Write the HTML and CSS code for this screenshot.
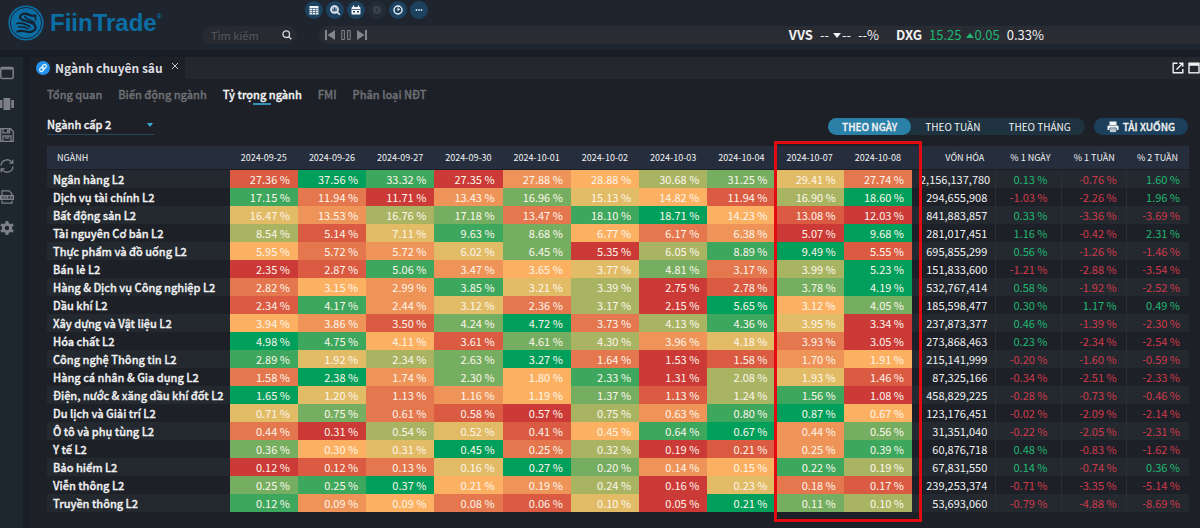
FILE: index.html
```html
<!DOCTYPE html>
<html lang="vi">
<head>
<meta charset="utf-8">
<title>FiinTrade - Ngành chuyên sâu</title>
<link rel="stylesheet" href="styles.css">
</head>
<body>
<header class="topbar">
  <a class="brand" href="#" aria-label="FiinTrade">
    <svg class="brand-mark" viewBox="0 0 36 36" aria-hidden="true">
      <circle cx="18" cy="18" r="17.6" fill="#0b6ea4"/>
      <circle cx="18" cy="18" r="15.6" fill="none" stroke="#1b2733" stroke-width="1"/>
      <g fill="none" stroke="#14212e" stroke-linecap="round" stroke-linejoin="round">
        <path d="M27 10.500c-3 1.500-5-1-8.500-1.700-3.500-.6-6.500 1-6.500 3.700 0 4 14 3.500 15.500 9 .8 3.500-3 5.800-7 5.500-4-.3-6.500-2.500-11-.5" stroke-width="2.200"/>
        <path d="M17 11.500c0 3 8 3.500 9.500 6.500M27.500 10v5M9 18.500c4-1 9 .5 13 3.500M10.500 22c3-.6 7 0 9.500 2" stroke-width="1.600"/>
      </g>
    </svg>
    <span class="brand-name">FiinTrade<sup>®</sup></span>
  </a>
  <div class="topbar-main">
    <nav class="quick" aria-label="Công cụ">
      <button class="quick-btn" aria-label="Bảng giá"><svg viewBox="0 0 18 18"><rect x="4.500" y="5" width="9" height="8.500" fill="#eef3f8"/><path d="M4.500 7.500h9M4.500 9.500h9M4.500 11.500h9M7.500 7v6.500M10.500 7v6.500" stroke="#3c5f7e" stroke-width=".7"/></svg></button>
      <button class="quick-btn" aria-label="Phân tích"><svg viewBox="0 0 18 18"><circle cx="8.500" cy="8.500" r="3.700" fill="#9db4cc" stroke="#eef3f8" stroke-width="1.300"/><path d="M7 10V8M8.500 10V6.500M10 10V7.500" stroke="#29455f"/><path d="M11.300 11.300l2.400 2.500" stroke="#eef3f8" stroke-width="1.600"/></svg></button>
      <button class="quick-btn" aria-label="Lịch"><svg viewBox="0 0 18 18"><rect x="4.500" y="6" width="9" height="7.500" rx="1" fill="#eef3f8"/><path d="M6.500 4.500V7M11.500 4.500V7" stroke="#eef3f8" stroke-width="1.400"/><path d="M4.500 8.500h9" stroke="#29455f" stroke-width=".8"/><path d="M6 10h2v1.600H6zM10 10h2v1.600h-2z" fill="#29455f"/></svg></button>
      <button class="quick-btn quick-off" aria-label="Tắt"><svg viewBox="0 0 18 18"><circle cx="9" cy="9" r="4" fill="#3a444f"/><path d="M9 7v4" stroke="#27313c" stroke-width="1.500"/></svg></button>
      <button class="quick-btn" aria-label="Lịch sử"><svg viewBox="0 0 18 18" fill="none" stroke="#eef3f8" stroke-width="1.400"><circle cx="9" cy="9" r="4"/><path d="M9 6.500V9l1.800-1" stroke-width="1.100"/></svg></button>
      <button class="quick-btn" aria-label="Thêm"><svg viewBox="0 0 18 18" fill="#cfe0ee"><circle cx="6.500" cy="9" r=".9"/><circle cx="9" cy="9" r=".9"/><circle cx="11.500" cy="9" r=".9"/></svg></button>
    </nav>
    <div class="ticker-row">
      <label class="search"><input type="text" placeholder="Tìm kiếm" aria-label="Tìm kiếm"><svg viewBox="0 0 12 12" fill="none" stroke="#d5d8dc" stroke-width="1.300"><circle cx="5.200" cy="5.200" r="3.300"/><path d="M7.700 7.700l2.600 2.600"/></svg></label>
      <div class="ticker">
        <div class="player">
          <button aria-label="Trước"><svg viewBox="0 0 10 12" fill="#83868b"><path d="M0 1h2v10H0zM10 1v10L2.500 6z"/></svg></button>
          <button aria-label="Tạm dừng"><svg viewBox="0 0 10 12" fill="none" stroke="#83868b"><path d="M.8 1.500h2.600v9H.8zM6.600 1.500h2.600v9H6.600z"/></svg></button>
          <button aria-label="Sau"><svg viewBox="0 0 10 12" fill="#83868b"><path d="M8 1h2v10H8zM0 1v10l7.500-5z"/></svg></button>
        </div>
        <div class="quotes">
          <p class="quote"><b>VVS</b><span>--<i class="tri tri-down"></i>--</span><span>--%</span></p>
          <p class="quote"><b>DXG</b><span class="gain">15.25<i class="tri tri-up"></i>0.05</span><span>0.33%</span></p>
        </div>
      </div>
    </div>
  </div>
</header>

<div class="workspace">
  <aside class="rail">
    <button aria-label="Cửa sổ"><svg viewBox="0 0 14 14" fill="none" stroke="#7d8187" stroke-width="1.500"><rect x=".8" y="1.500" width="12.400" height="11" rx="1.500"/><path d="M1 2.600h12" stroke-width="2"/></svg></button>
    <button aria-label="Bố cục"><svg viewBox="0 0 14 14" fill="#7d8187"><path d="M3.500 1h6.800v12H3.500zM0 3h2.500v8H0zM11.300 3H14v8h-2.700z"/></svg></button>
    <button aria-label="Lưu"><svg viewBox="0 0 14 14" fill="none" stroke="#7d8187" stroke-width="1.300"><path d="M.7.700h9.800l2.800 2.800v9.800H.7zM3 1v3.800h6.500V1M3 13V8h8v5M5 10h4"/><path d="M7.800 1.500v2.500" stroke-width="1.600"/></svg></button>
    <button aria-label="Làm mới"><svg viewBox="0 0 14 14" fill="none" stroke="#7d8187" stroke-width="1.300"><path d="M1 6.500A6 6 0 0 1 12 3.500M13 7.500A6 6 0 0 1 2 10.500M12.800.8v3.400H9.300M1.200 13.200V9.800h3.500"/></svg></button>
    <button aria-label="Xuất XLSX"><svg viewBox="0 0 14 14" fill="none" stroke="#7d8187" stroke-width="1.200"><path d="M2 5V.8h7l3 3V5M2 10.500v2.700h10v-2.700"/><rect x="0" y="5" width="14" height="5" fill="#7d8187" stroke="none"/><path d="M2 6.300l2 2.600M4 6.300L2 8.900M5.700 6v2.600h1.500M10 6.500H8.300v1H10v1H8.200M11 6.300l1.700 2.600M12.700 6.300L11 8.900" stroke="#252c35" stroke-width=".7"/></svg></button>
    <button aria-label="Cài đặt"><svg viewBox="0 0 14 14"><circle cx="7" cy="7" r="3.700" fill="none" stroke="#7d8187" stroke-width="3"/><path d="M7 0v2.500M7 11.500V14M0.900 3.500l2.200 1.200M10.900 9.300l2.200 1.200M.9 10.500l2.200-1.200M10.900 4.700l2.200-1.200" stroke="#7d8187" stroke-width="3"/></svg></button>
  </aside>

  <main class="panel">
    <div class="panel-head">
      <div class="panel-tab">
        <svg class="link-badge" viewBox="0 0 14 14" aria-hidden="true"><circle cx="7" cy="7" r="7" fill="#2492ec"/><g fill="none" stroke="#e8f5ff" stroke-width="1.200" transform="rotate(-48 7 7)"><rect x="2.800" y="5.300" width="5" height="3.400" rx="1.700"/><rect x="6.200" y="5.300" width="5" height="3.400" rx="1.700"/></g></svg>
        <h1>Ngành chuyên sâu</h1>
        <button class="close" aria-label="Đóng"><svg viewBox="0 0 8 8" stroke="#c8cacd" stroke-width="1"><path d="M1 1l6 6M7 1L1 7"/></svg></button>
      </div>
      <div class="window-tools">
        <button aria-label="Mở rộng"><svg viewBox="0 0 12 12" fill="none" stroke="#f0f1f2" stroke-width="1.400"><path d="M5.500 1.200H1.200v9.600h9.600V7M7.200 1.200h3.600v3.600M10.500 1.500L4.500 7.500"/></svg></button>
        <button aria-label="Phóng to"><svg viewBox="0 0 12 12" fill="none" stroke="#f0f1f2" stroke-width="1.400"><rect x="1" y="1.200" width="10" height="9.600"/><path d="M1 2.500h10" stroke-width="2.500"/></svg></button>
      </div>
    </div>

    <nav class="subtabs">
      <a href="#">Tổng quan</a>
      <a href="#">Biến động ngành</a>
      <a href="#" class="current" aria-current="page">Tỷ trọng ngành</a>
      <a href="#">FMI</a>
      <a href="#">Phân loại NĐT</a>
    </nav>

    <div class="controls">
      <div class="level">
        <select aria-label="Cấp ngành"><option>Ngành cấp 2</option><option>Ngành cấp 1</option></select>
      </div>
      <div class="actions">
        <div class="period">
          <button class="active">THEO NGÀY</button>
          <button>THEO TUẦN</button>
          <button>THEO THÁNG</button>
        </div>
        <button class="download"><svg viewBox="0 0 12 12" fill="#f2f5f8"><path d="M2.500.5h7V4h-7zM1.500 4.500h9a1 1 0 0 1 1 1V9H.5V5.500a1 1 0 0 1 1-1z"/><path d="M2.800 7h6.400v4.500H2.800z" stroke="#1c405b" stroke-width=".8"/><path d="M4 8.700h4M4 10h4" stroke="#5e7890" stroke-width=".6"/></svg>TẢI XUỐNG</button>
      </div>
    </div>

    <div class="table-wrap">
      <table class="weights">
        <colgroup><col class="c-name"><col class="c-day" span="10"><col class="c-cap"><col class="c-d1"><col class="c-w1"><col class="c-w2"></colgroup>
        <thead>
          <tr>
            <th scope="col" class="name">NGÀNH</th>
            <th scope="col">2024-09-25</th><th scope="col">2024-09-26</th><th scope="col">2024-09-27</th><th scope="col">2024-09-30</th><th scope="col">2024-10-01</th>
            <th scope="col">2024-10-02</th><th scope="col">2024-10-03</th><th scope="col">2024-10-04</th><th scope="col">2024-10-07</th><th scope="col">2024-10-08</th>
            <th scope="col">VỐN HÓA</th><th scope="col">% 1 NGÀY</th><th scope="col">% 1 TUẦN</th><th scope="col">% 2 TUẦN</th>
          </tr>
        </thead>
        <tbody id="rows"></tbody>
      </table>
      <div class="highlight"></div>
    </div>
  </main>
</div>
<script src="table.js"></script>
</body>
</html>
```
FILE: table.js
```js
// name | ten daily weights | heat level of each day (0 low - 9 high) | market cap | 1 day, 1 week, 2 weeks
const data = `
Ngân hàng L2|27.36 37.56 33.32 27.35 27.88 28.88 30.68 31.25 29.41 27.74|1980346752|2,156,137,780|0.13 -0.76 1.60
Dịch vụ tài chính L2|17.15 11.94 11.71 13.43 16.96 15.13 14.82 11.94 16.90 18.60|8203754169|294,655,908|-1.03 -2.26 1.96
Bất động sản L2|16.47 13.53 16.76 17.18 13.47 18.10 18.71 14.23 13.08 12.03|5367289410|841,883,857|0.33 -3.36 -3.69
Tài nguyên Cơ bản L2|8.54 5.14 7.11 9.63 8.68 6.77 6.17 6.38 5.07 9.68|6158742309|281,017,451|1.16 -0.42 2.31
Thực phẩm và đồ uống L2|5.95 5.72 5.72 6.02 6.45 5.35 6.05 8.89 9.49 5.55|4235706891|695,855,299|0.56 -1.26 -1.46
Bán lẻ L2|2.35 2.87 5.06 3.47 3.65 3.77 4.81 3.17 3.99 5.23|0183457269|151,833,600|-1.21 -2.88 -3.54
Hàng & Dịch vụ Công nghiệp L2|2.82 3.15 2.99 3.85 3.21 3.39 2.75 2.78 3.78 4.19|2438560179|532,767,414|0.58 -1.92 -2.52
Dầu khí L2|2.34 4.17 2.44 3.12 2.36 3.17 2.15 5.65 3.12 4.05|1835260947|185,598,477|0.30 1.17 0.49
Xây dựng và Vật liệu L2|3.94 3.86 3.50 4.24 4.72 3.73 4.13 4.36 3.95 3.34|4317926850|237,873,377|0.46 -1.39 -2.30
Hóa chất L2|4.98 4.75 4.11 3.61 4.61 4.30 3.96 4.18 3.93 3.05|9841763520|273,868,463|0.23 -2.34 -2.54
Công nghệ Thông tin L2|2.89 1.92 2.34 2.63 3.27 1.64 1.53 1.58 1.70 1.91|8567920134|215,141,999|-0.20 -1.60 -0.59
Hàng cá nhân & Gia dụng L2|1.58 2.38 1.74 2.30 1.80 2.33 1.31 2.08 1.93 1.46|2937480651|87,325,166|-0.34 -2.51 -2.33
Điện, nước & xăng dầu khí đốt L2|1.65 1.20 1.13 1.16 1.19 1.37 1.13 1.24 1.56 1.08|9523471680|458,829,225|-0.28 -0.73 -0.46
Du lịch và Giải trí L2|0.71 0.75 0.61 0.58 0.57 0.75 0.63 0.80 0.87 0.67|5721063894|123,176,451|-0.02 -2.09 -2.14
Ô tô và phụ tùng L2|0.44 0.31 0.54 0.52 0.41 0.45 0.64 0.67 0.44 0.56|2065148937|31,351,040|-0.22 -2.05 -2.31
Y tế L2|0.36 0.30 0.31 0.45 0.25 0.32 0.19 0.21 0.25 0.39|7459260138|60,876,718|0.48 -0.83 -1.62
Bảo hiểm L2|0.12 0.12 0.13 0.16 0.27 0.20 0.14 0.15 0.22 0.19|0125973486|67,831,550|0.14 -0.74 0.36
Viễn thông L2|0.25 0.25 0.37 0.21 0.19 0.24 0.16 0.23 0.18 0.17|7894360521|239,253,374|-0.71 -3.35 -5.14
Truyền thông L2|0.12 0.09 0.09 0.08 0.06 0.10 0.05 0.21 0.11 0.10|8342150976|53,693,060|-0.79 -4.88 -8.69`;

const body = document.getElementById('rows');

function addCell(row, text, className) {
  const cell = row.insertCell();
  cell.textContent = text;
  cell.className = className;
}

for (const line of data.trim().split('\n')) {
  const [name, weights, levels, cap, changes] = line.split('|');
  const row = body.insertRow();
  addCell(row, name, 'name');
  weights.split(' ').forEach((w, i) => addCell(row, w + ' %', 'heat heat-' + levels[i]));
  addCell(row, cap, 'cap');
  changes.split(' ').forEach(c => addCell(row, c + ' %', 'change ' + (c[0] === '-' ? 'loss' : 'gain')));
}
```
FILE: styles.css
```css
* { box-sizing: border-box; }
body {
  margin: 0;
  height: 100vh;
  overflow: hidden;
  display: flex;
  flex-direction: column;
  background: #191d26;
  color: #f1f2f3;
  font-family: "Noto Sans CJK SC", "Noto Sans", sans-serif;
  font-size: 11px;
  line-height: 18px;
}
button, input, select { font: inherit; color: inherit; background: none; border: 0; padding: 0; margin: 0; }
button { cursor: pointer; }
svg { display: block; }
a { color: inherit; text-decoration: none; }
p, h1 { margin: 0; }

.topbar { display: flex; height: 50px; background: #1e252f; }
.brand { display: flex; align-items: flex-start; gap: 6px; width: 202px; padding: 5px 0 0 8px; color: #0b6ea4; }
.brand-mark { width: 36px; height: 36px; }
.brand-name { font: bold 24px/36px "Liberation Sans", Arial, sans-serif; }
.brand-name sup { font-size: 7px; line-height: 8px; vertical-align: 12px; }
.topbar-main { flex: 1; min-width: 0; display: flex; flex-direction: column; gap: 7px; padding-top: 1px; }
.quick { display: flex; gap: 3px; padding-left: 103px; }
.quick-btn { width: 18px; height: 18px; border-radius: 50%; background: #1c425f; }
.quick-off { background: #222d38; }
.ticker-row { display: flex; gap: 22px; }
.search { display: flex; align-items: center; width: 95px; height: 18px; padding: 0 4px 0 9px; border-radius: 9px; background: #272a31; }
.search input { flex: 1; min-width: 0; outline: 0; }
.search input::placeholder { color: #55585e; opacity: 1; }
.search svg { width: 12px; height: 12px; }
.ticker { flex: 1; display: flex; align-items: center; height: 18px; padding-left: 6px; border-radius: 9px 0 0 9px; background: #2a2c33; }
.player { display: flex; gap: 6px; }
.player svg { width: 10px; height: 12px; }
.quotes { margin-left: auto; display: flex; gap: 17px; padding-right: 156px; font-size: 13px; line-height: 16px; }
.quote { display: flex; gap: 7px; }
.tri { display: inline-block; border: 4px solid transparent; margin: 0 1px 0 4px; }
.tri-down { border-top: 5px solid #f1f2f3; border-bottom: 0; vertical-align: 2px; }
.tri-up { border-bottom: 5px solid #22b573; border-top: 0; vertical-align: 2px; }
.gain { color: #1fb873; }
.loss { color: #d03a4b; }

.workspace { flex: 1; display: flex; gap: 7px; padding-top: 7px; min-height: 0; }
.rail { width: 23px; display: flex; flex-direction: column; gap: 17px; padding-top: 9px; background: #1e2630; }
.rail svg { width: 14px; height: 14px; }
.panel { flex: 1; min-width: 0; background: #1e2027; }
.panel-head { display: flex; justify-content: space-between; height: 22px; background: #25272f; }
.panel-tab { display: flex; align-items: center; gap: 5px; padding: 0 6px; background: #1e2027; }
.link-badge { width: 14px; height: 14px; }
.panel-tab h1 { font-size: 12px; line-height: 22px; font-weight: 700; color: #dcdde0; }
.close { align-self: flex-start; padding: 5px 0 0 3px; }
.close svg { width: 8px; height: 8px; }
.window-tools { display: flex; align-items: center; gap: 4px; }
.window-tools svg { width: 12px; height: 12px; }

.subtabs, .level select, .weights td.name, .period .active, .download { font-weight: 500; -webkit-text-stroke: 0.3px currentColor; }
.subtabs { display: flex; gap: 16px; padding: 6px 17px 0; color: #6e7176; }
.subtabs .current { color: #f4f5f6; display: flex; flex-direction: column; align-items: center; }
.subtabs .current::after { content: ""; width: 18px; height: 2px; background: #3192bd; }
.controls { display: flex; justify-content: space-between; align-items: flex-end; padding: 9px 12px 11px 17px; }
.level { position: relative; width: 107px; border-bottom: 1px solid #23495a; }
.level select { width: 100%; height: 20px; appearance: none; }
.level::after { content: ""; position: absolute; right: 1px; top: 9px; border: 3px solid transparent; border-top: 4px solid #38acd3; border-bottom: 0; pointer-events: none; }
.actions { display: flex; gap: 9px; font-size: 10px; line-height: 17px; }
.period { display: flex; border-radius: 9px; background: #1f3240; }
.period button { padding: 0 14px; }
.period .active { border-radius: 9px; background: #2b80a7; }
.download { display: flex; align-items: center; gap: 4px; padding: 0 13px; border-radius: 9px; background: #1c405b; }
.download svg { width: 12px; height: 12px; }

.table-wrap { position: relative; margin: 0 11px 0 17px; }
.weights { width: 100%; table-layout: fixed; border-collapse: separate; border-spacing: 0; white-space: nowrap; }
.c-name { width: 182px; }
.c-day { width: 68px; }
.c-cap { width: 83px; }
.c-d1 { width: 66px; }
.c-w1 { width: 64px; }
.c-w2 { width: 63px; }
.weights th, .weights td { padding: 0 8px; height: 18px; line-height: 16px; text-align: right; }
.weights th { height: 24px; padding: 0 11px 0 10px; font-size: 9px; font-weight: 400; background: #262e3e; border-bottom: 1px solid #1b1d24; }
.weights td.name, .weights th.name { text-align: left; }
.weights td.name { padding: 0 0 0 6px; }
.weights tbody tr:nth-child(odd) { background: #23292f; }
.weights td.change { padding-right: 9px; border-left: 1px solid #2a2f36; }
.weights .change:nth-child(13) { padding-right: 14px; }
.weights .heat { color: #fdf6ec; }
.heat-0 { background: #cb3a36; }
.heat-1 { background: #da5b42; }
.heat-2 { background: #e4774e; }
.heat-3 { background: #ef9459; }
.heat-4 { background: #fcb162; }
.heat-5 { background: #e2bb66; }
.heat-6 { background: #a9b463; }
.heat-7 { background: #75ae60; }
.heat-8 { background: #3ca75d; }
.heat-9 { background: #009f5b; }
.highlight { position: absolute; left: 63.7%; right: 23.4%; top: -5px; bottom: -10px; border: 3px solid #e30b12; pointer-events: none; }
```
